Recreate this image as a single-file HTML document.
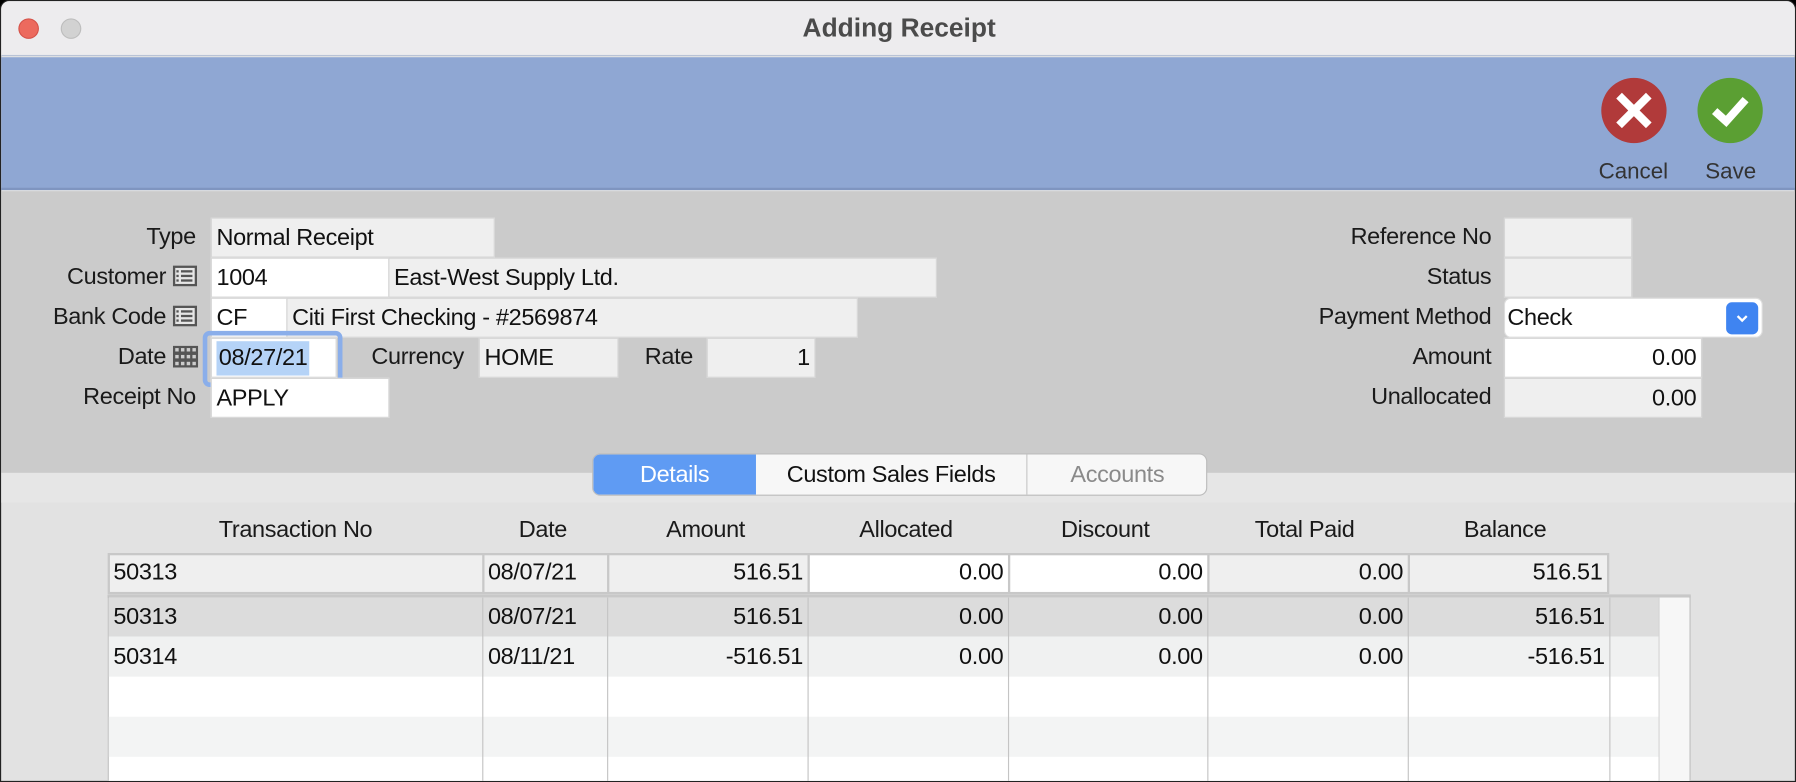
<!DOCTYPE html>
<html><head><meta charset="utf-8"><style>
*{box-sizing:border-box;margin:0;padding:0}
body{width:1796px;height:782px;overflow:hidden;background:#000;font-family:"Liberation Sans",Arial,sans-serif}
#w{position:absolute;left:0;top:0;width:1568px;height:683px;transform:scale(1.14541,1.14495);transform-origin:0 0;background:#e2e2e2;overflow:hidden;border:1px solid #222;border-radius:8px 8px 0 0}
.a{position:absolute}
.lbl{position:absolute;font-size:20.5px;color:#1a1a1a;text-align:right;line-height:34px;height:34px;letter-spacing:-0.3px}
.f{position:absolute;height:35px;background:#efefef;border:1px solid #d6d6d6;font-size:20.5px;line-height:33px;padding:0 4px;color:#111;white-space:nowrap;letter-spacing:-0.3px}
.wt{background:#fff}
.r{text-align:right}
.ic{position:absolute;width:21px;height:18px;border:2px solid #555;background:#e6e6e6}
.ic i{position:absolute;left:5px;right:2px;height:2px;background:#555}
.ic b{position:absolute;left:1px;width:2px;height:2px;background:#555}
.hd{position:absolute;top:449px;font-size:20.5px;color:#1a1a1a;text-align:center;line-height:26px;letter-spacing:-0.3px}
.c{position:absolute;height:35px;font-size:20.5px;line-height:35px;padding:0 4px;color:#111;letter-spacing:-0.3px}
</style></head><body><div id="w">
<div class="a" style="left:0;top:0;width:1568px;height:48px;background:#edecee;border-bottom:1px solid #b9c3d6"></div>
<div class="a" style="left:15px;top:15px;width:18px;height:18px;border-radius:50%;background:#ec6a5e;border:1px solid #d5534a"></div>
<div class="a" style="left:52px;top:15px;width:18px;height:18px;border-radius:50%;background:#d2d2d2;border:1px solid #bdbdbd"></div>
<div class="a" style="left:0;top:9px;width:1568px;text-align:center;font-size:23px;font-weight:bold;color:#4b4b4b;line-height:28px">Adding Receipt</div>
<div class="a" style="left:0;top:49px;width:1568px;height:116px;background:#8fa7d3;border-bottom:2px solid #7f95c0"></div>
<div class="a" style="left:1397px;top:67px;width:57px;height:57px;border-radius:50%;background:#b13a3a"></div>
<svg class="a" style="left:1397px;top:67px" width="57" height="57"><path d="M18 18L39 39M39 18L18 39" stroke="#fff" stroke-width="7" stroke-linecap="square"/></svg>
<div class="a" style="left:1481px;top:67px;width:57px;height:57px;border-radius:50%;background:#5b9f33"></div>
<svg class="a" style="left:1481px;top:67px" width="57" height="57"><path d="M15 29L25 38L42 19" stroke="#fff" stroke-width="7" fill="none"/></svg>
<div class="a" style="left:1385px;top:138px;width:80px;text-align:center;font-size:19.5px;color:#333">Cancel</div>
<div class="a" style="left:1470px;top:138px;width:80px;text-align:center;font-size:19.5px;color:#333">Save</div>
<div class="a" style="left:0;top:166px;width:1568px;height:246px;background:#cbcbcb"></div>
<div class="a" style="left:0;top:412px;width:1568px;height:26px;background:#e6e6e6"></div>

<div class="lbl" style="left:0;width:170px;top:189px">Type</div>
<div class="f" style="left:183px;top:189px;width:248px">Normal Receipt</div>
<div class="lbl" style="left:0;width:144px;top:224px">Customer</div>
<div class="ic" style="left:150px;top:231px"><i style="top:2px"></i><i style="top:6px"></i><i style="top:10px"></i><b style="top:2px"></b><b style="top:6px"></b><b style="top:10px"></b></div>
<div class="f wt" style="left:183px;top:224px;width:156px">1004</div>
<div class="f" style="left:338px;top:224px;width:479px">East-West Supply Ltd.</div>
<div class="lbl" style="left:0;width:144px;top:259px">Bank Code</div>
<div class="ic" style="left:150px;top:266px"><i style="top:2px"></i><i style="top:6px"></i><i style="top:10px"></i><b style="top:2px"></b><b style="top:6px"></b><b style="top:10px"></b></div>
<div class="f wt" style="left:183px;top:259px;width:67px">CF</div>
<div class="f" style="left:249px;top:259px;width:499px">Citi First Checking - #2569874</div>
<div class="lbl" style="left:0;width:144px;top:294px">Date</div>
<svg class="a" style="left:150px;top:301px" width="22" height="19"><rect width="22" height="19" fill="#555"/><g fill="#ccc"><rect x="2" y="2" width="3" height="3"/><rect x="7" y="2" width="3" height="3"/><rect x="12" y="2" width="3" height="3"/><rect x="17" y="2" width="3" height="3"/><rect x="2" y="8" width="3" height="3"/><rect x="7" y="8" width="3" height="3"/><rect x="12" y="8" width="3" height="3"/><rect x="17" y="8" width="3" height="3"/><rect x="2" y="14" width="3" height="3"/><rect x="7" y="14" width="3" height="3"/><rect x="12" y="14" width="3" height="3"/><rect x="17" y="14" width="3" height="3"/></g></svg>
<div class="a" style="left:176px;top:288px;width:122px;height:49px;border:4px solid #8aaeea;border-radius:6px"></div>
<div class="f wt" style="left:183px;top:294px;width:110px;padding:0"><span style="display:inline-block;margin-left:4px;background:#b5d3f7;padding:0 2px;line-height:30px;margin-top:1px">08/27/21</span></div>
<div class="lbl" style="left:300px;width:104px;top:294px">Currency</div>
<div class="f" style="left:417px;top:294px;width:122px">HOME</div>
<div class="lbl" style="left:540px;width:64px;top:294px">Rate</div>
<div class="f r" style="left:616px;top:294px;width:95px">1</div>
<div class="lbl" style="left:0;width:170px;top:329px">Receipt No</div>
<div class="f wt" style="left:183px;top:329px;width:156px">APPLY</div>

<div class="lbl" style="left:1090px;width:211px;top:189px">Reference No</div>
<div class="f" style="left:1312px;top:189px;width:112px"></div>
<div class="lbl" style="left:1100px;width:201px;top:224px">Status</div>
<div class="f" style="left:1312px;top:224px;width:112px"></div>
<div class="lbl" style="left:1080px;width:221px;top:259px">Payment Method</div>
<div class="f wt" style="left:1312px;top:259px;width:226px;border-radius:6px;border-color:#ddd;padding-left:2px">Check</div>
<div class="a" style="left:1506px;top:263px;width:28px;height:28px;border-radius:5px;background:#3f84f1"></div>
<svg class="a" style="left:1506px;top:263px" width="28" height="28"><path d="M10 12L14 16L18 12" stroke="#fff" stroke-width="2" fill="none"/></svg>
<div class="lbl" style="left:1100px;width:201px;top:294px">Amount</div>
<div class="f wt r" style="left:1312px;top:294px;width:173px">0.00</div>
<div class="lbl" style="left:1100px;width:201px;top:329px">Unallocated</div>
<div class="f r" style="left:1312px;top:329px;width:173px">0.00</div>

<div class="a" style="left:516px;top:395px;width:537px;height:37px;border:1px solid #bcbcbc;border-radius:7px;background:#f7f7f7;overflow:hidden;font-size:20.5px;line-height:35px;letter-spacing:-0.3px">
<div class="a" style="left:0;top:0;width:142px;height:35px;background:#5f9bf3;color:#fff;text-align:center">Details</div>
<div class="a" style="left:142px;top:0;width:237px;height:35px;text-align:center;color:#111;border-right:1px solid #c8c8c8">Custom Sales Fields</div>
<div class="a" style="left:379px;top:0;width:157px;height:35px;text-align:center;color:#8a8a8a">Accounts</div>
</div>

<div class="hd" style="left:94px;width:326px">Transaction No</div>
<div class="hd" style="left:421px;width:104px">Date</div>
<div class="hd" style="left:530px;width:170px">Amount</div>
<div class="hd" style="left:705px;width:170px">Allocated</div>
<div class="hd" style="left:880px;width:168px">Discount</div>
<div class="hd" style="left:1054px;width:168px">Total Paid</div>
<div class="hd" style="left:1229px;width:168px">Balance</div>

<div class="a" style="left:93px;top:482px;width:1311px;height:36px;background:#c8c8c8"></div>
<div class="f" style="left:95px;top:484px;width:325px;height:32px;line-height:30px;border:none;padding-left:3px">50313</div>
<div class="f" style="left:422px;top:484px;width:107px;height:32px;line-height:30px;border:none;padding-left:3px">08/07/21</div>
<div class="f r" style="left:531px;top:484px;width:173px;height:32px;line-height:30px;border:none">516.51</div>
<div class="f r wt" style="left:706px;top:484px;width:173px;height:32px;line-height:30px;border:none">0.00</div>
<div class="f r wt" style="left:881px;top:484px;width:172px;height:32px;line-height:30px;border:none">0.00</div>
<div class="f r" style="left:1055px;top:484px;width:173px;height:32px;line-height:30px;border:none">0.00</div>
<div class="f r" style="left:1230px;top:484px;width:172px;height:32px;line-height:30px;border:none">516.51</div>

<div class="a" style="left:93px;top:518px;width:1382px;height:170px;background:#fff;border:1px solid #bdbdbd;border-top:3px solid #c8c8c8"></div>
<div class="a" style="left:94px;top:521px;width:1353px;height:34px;background:#dcdcdc"></div>
<div class="a" style="left:94px;top:555px;width:1353px;height:35px;background:#f0f1f1"></div>
<div class="a" style="left:94px;top:625px;width:1353px;height:35px;background:#f3f4f4"></div>
<div class="a" style="left:1447px;top:521px;width:1px;height:170px;background:#d0d0d0"></div>
<div class="a" style="left:1448px;top:521px;width:26px;height:170px;background:#f7f7f7"></div>
<div class="a" style="left:420px;top:521px;width:1px;height:170px;background:#c4c4c4"></div>
<div class="a" style="left:529px;top:521px;width:1px;height:170px;background:#c4c4c4"></div>
<div class="a" style="left:704px;top:521px;width:1px;height:170px;background:#c4c4c4"></div>
<div class="a" style="left:879px;top:521px;width:1px;height:170px;background:#c4c4c4"></div>
<div class="a" style="left:1053px;top:521px;width:1px;height:170px;background:#c4c4c4"></div>
<div class="a" style="left:1228px;top:521px;width:1px;height:170px;background:#c4c4c4"></div>
<div class="a" style="left:1404px;top:521px;width:1px;height:170px;background:#c4c4c4"></div>

<div class="c" style="left:94px;top:520px">50313</div>
<div class="c" style="left:421px;top:520px">08/07/21</div>
<div class="c r" style="left:530px;top:520px;width:174px">516.51</div>
<div class="c r" style="left:705px;top:520px;width:174px">0.00</div>
<div class="c r" style="left:880px;top:520px;width:173px">0.00</div>
<div class="c r" style="left:1054px;top:520px;width:174px">0.00</div>
<div class="c r" style="left:1229px;top:520px;width:175px">516.51</div>

<div class="c" style="left:94px;top:555px">50314</div>
<div class="c" style="left:421px;top:555px">08/11/21</div>
<div class="c r" style="left:530px;top:555px;width:174px">-516.51</div>
<div class="c r" style="left:705px;top:555px;width:174px">0.00</div>
<div class="c r" style="left:880px;top:555px;width:173px">0.00</div>
<div class="c r" style="left:1054px;top:555px;width:174px">0.00</div>
<div class="c r" style="left:1229px;top:555px;width:175px">-516.51</div>
</div></body></html>
